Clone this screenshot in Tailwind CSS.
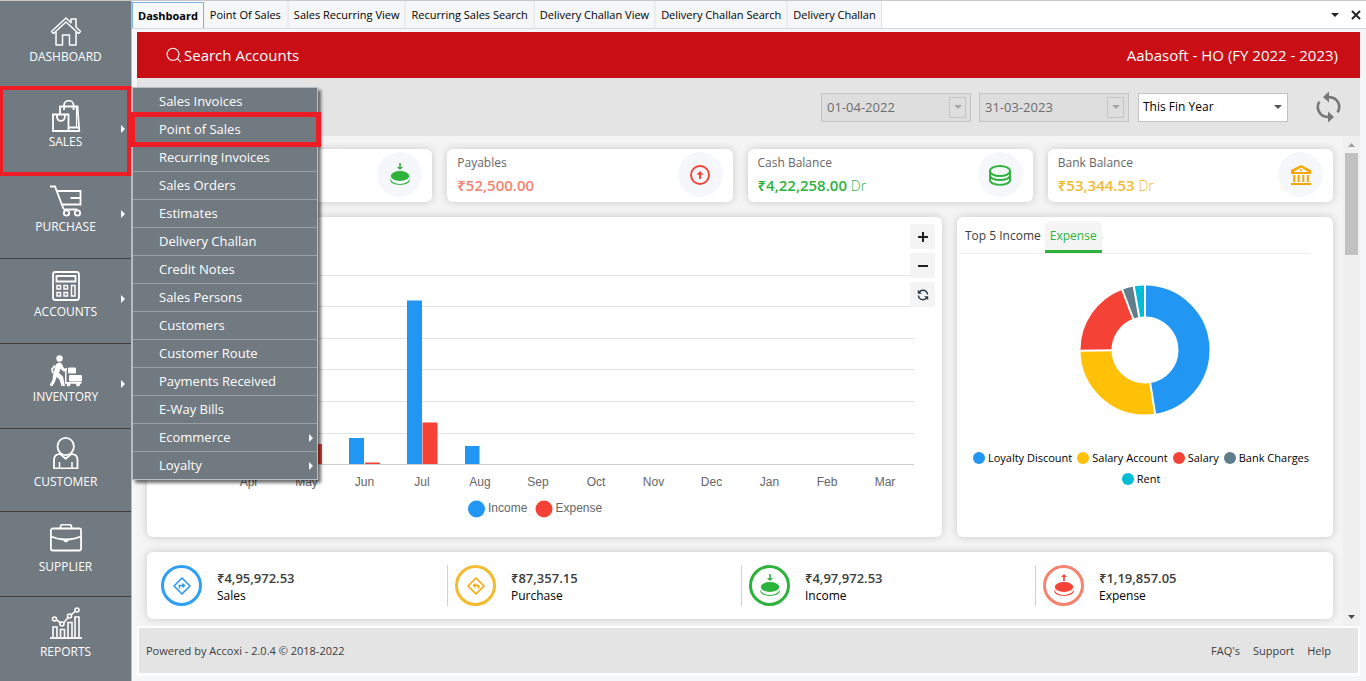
<!DOCTYPE html>
<html lang="en">
<head>
<meta charset="utf-8">
<meta name="viewport" content="width=device-width, initial-scale=1">
<title>Accoxi - Dashboard</title>
<script src="https://cdn.jsdelivr.net/npm/@tailwindcss/browser@4"></script>
</head>
<body class="flex h-screen overflow-hidden border-t border-[#c8c8c8] bg-[#f5f6f8] font-['Open_Sans','Noto_Sans',sans-serif] text-[#3c3c3c]">

<!-- Module navigation -->
<nav class="relative z-10 w-[131px] shrink-0 bg-[#717981] pt-[3px] text-xs text-white" aria-label="Modules">
  <ul>
    <li class="h-[85px]">
      <a href="#" class="flex h-full flex-col items-center pt-[11px]">
        <svg class="size-8" viewBox="0 0 32 32" fill="none" stroke="currentColor" stroke-width="1.5" stroke-linejoin="round"><path d="M1.500 16.500 16 3l5 4.700V4h5v8l4.500 4.500-2 2L16 7 3.500 18.500z"/><path d="M6 17v13h6.500V20h7v10H26V17"/></svg>
        <span class="leading-5">DASHBOARD</span>
      </a>
    </li>
    <li class="relative h-[85px]">
      <a href="#" class="flex h-full flex-col items-center pt-[11px]" aria-haspopup="menu" aria-expanded="true">
        <svg class="size-8" viewBox="0 0 32 32" fill="none" stroke="currentColor" stroke-width="1.800"><path d="M3 14.500h15.500V31H3z"/><path d="M7 14.500v2.500a3.900 3.900 0 0 0 7.800 0v-2.500"/><path d="M10 14.500V6.500h17.500L29.300 31H18.500M14 10V5.500a4.800 4.800 0 0 1 9.600 0V10M19 27.500h10"/><path d="M26.500 7v20" stroke-width="1.200"/></svg>
        <span class="leading-5">SALES</span>
      </a>
      <span class="absolute right-[6px] top-[36px] h-0 w-0 border-y-4 border-l-4 border-y-transparent border-l-white"></span>
      <div class="pointer-events-none absolute inset-x-0 -top-[3px] h-[90px] border-4 border-l-[3px] border-[#ee1c25]"></div>

      <!-- Sales submenu -->
      <ul class="absolute left-[132px] -top-[2px] w-[186px] border border-[#b9bec3] bg-[#717981] text-[13px] text-white shadow-[3px_3px_3px_rgba(0,0,0,0.55)] [&>li]:h-7 [&>li:first-child]:h-[27px] [&>li+li]:border-t [&>li+li]:border-[#99a0a6] [&_a]:flex [&_a]:h-full [&_a]:items-center [&_a]:justify-between [&_a]:pl-[26px] [&_a]:pr-1" role="menu">
        <li><a href="#">Sales Invoices</a></li>
        <li class="relative"><a href="#">Point of Sales</a>
          <div class="pointer-events-none absolute -left-[3px] -right-[4px] -top-[4px] h-[35px] border-[5px] border-[#ee1c25]"></div></li>
        <li><a href="#">Recurring Invoices</a></li>
        <li><a href="#">Sales Orders</a></li>
        <li><a href="#">Estimates</a></li>
        <li><a href="#">Delivery Challan</a></li>
        <li><a href="#">Credit Notes</a></li>
        <li><a href="#">Sales Persons</a></li>
        <li><a href="#">Customers</a></li>
        <li><a href="#">Customer Route</a></li>
        <li><a href="#">Payments Received</a></li>
        <li><a href="#">E-Way Bills</a></li>
        <li><a href="#">Ecommerce<span class="h-0 w-0 border-y-4 border-l-4 border-y-transparent border-l-white"></span></a></li>
        <li><a href="#">Loyalty<span class="h-0 w-0 border-y-4 border-l-4 border-y-transparent border-l-white"></span></a></li>
      </ul>
    </li>
    <li class="relative h-[85px] border-b border-[#3f3f3f]">
      <a href="#" class="flex h-full flex-col items-center pt-[11px]">
        <svg class="size-8" viewBox="0 0 32 32" fill="none" stroke="currentColor" stroke-width="1.800"><path d="M0 1.500h5L13.500 24M7 6h23.500v13.500H12M30.500 13H20.500M13.500 24.500h14"/><circle cx="16.500" cy="28" r="2.700"/><circle cx="27.500" cy="28" r="2.700"/></svg>
        <span class="leading-5">PURCHASE</span>
      </a>
      <span class="absolute right-[6px] top-[36px] h-0 w-0 border-y-4 border-l-4 border-y-transparent border-l-white"></span>
    </li>
    <li class="relative h-[85px] border-b border-[#3f3f3f]">
      <a href="#" class="flex h-full flex-col items-center pt-[11px]">
        <svg class="size-8" viewBox="0 0 32 32" fill="none" stroke="currentColor" stroke-width="1.800"><rect x="3" y="2" width="26" height="28" rx="2.500"/><path d="M6.500 6h19v5.500h-19z"/><g stroke-width="1.500"><path d="M7 15.500h3.500V19H7zM14 15.500h3.500V19H14zM7 22.500h3.500V26H7zM14 22.500h3.500V26H14zM21.500 15.500H25V26h-3.500z"/></g></svg>
        <span class="leading-5">ACCOUNTS</span>
      </a>
      <span class="absolute right-[6px] top-[36px] h-0 w-0 border-y-4 border-l-4 border-y-transparent border-l-white"></span>
    </li>
    <li class="relative h-[85px] border-b border-[#3f3f3f]">
      <a href="#" class="flex h-full flex-col items-center pt-[11px]">
        <svg class="size-8" viewBox="0 0 32 32" fill="currentColor"><circle cx="9.500" cy="3.500" r="3.200"/><path d="M6 9.500c1.500-2 4.500-2.500 6-.5l2 4.500 3-.5v2l-4.500 1-2-2.500-1.500 4.500 4 3.500L15 31h-3.500L9.500 24.500 6.500 22 5 27l-3 4.500-2.500-1.500 2.800-4.500L3.500 18zM4.500 9.500 1 14l1 4.500 1.500-.5-.5-3.500 2.500-3z"/><path d="M13.500 15h3v12h15v1.700H15V16.500h-1.500z"/><rect x="18" y="12.500" width="8" height="6" rx="1.300"/><rect x="19" y="20" width="13" height="6.500" rx="1.300"/><circle cx="18.500" cy="29.500" r="1.900"/><circle cx="28" cy="29.500" r="1.900"/></svg>
        <span class="leading-5">INVENTORY</span>
      </a>
      <span class="absolute right-[6px] top-[36px] h-0 w-0 border-y-4 border-l-4 border-y-transparent border-l-white"></span>
    </li>
    <li class="h-[83px] border-b border-[#3f3f3f]">
      <a href="#" class="flex h-full flex-col items-center pt-2">
        <svg class="mb-[3px] size-8" viewBox="0 0 32 32" fill="none" stroke="currentColor" stroke-width="1.800"><ellipse cx="15.700" cy="9.500" rx="8.200" ry="8.600"/><path d="M4 31.500V23c0-3.500 2-5.500 5-5.800h1.500l5.200 4.500 5.300-4.500h1.500c3 .3 5 2.300 5 5.800v8.500z"/><path d="M9.500 25v6.500M22 25v6.500" stroke-width="1.500"/></svg>
        <span class="leading-5">CUSTOMER</span>
      </a>
    </li>
    <li class="h-[85px] border-b border-[#3f3f3f]">
      <a href="#" class="flex h-full flex-col items-center pt-3">
        <svg class="mb-px size-8" viewBox="0 0 32 32" fill="none" stroke="currentColor" stroke-width="1.800"><rect x=".9" y="4.500" width="30.200" height="22" rx="2"/><path d="M10.500 4.500V3c0-1.500.5-2.300 2-2.300h7c1.500 0 2 .8 2 2.300v1.500M1 12.500c9 4 21 4 30 0"/><path d="M14 15.500h4v1.500c0 1-4 1-4 0z" fill="currentColor" stroke-width="1"/></svg>
        <span class="leading-5">SUPPLIER</span>
      </a>
    </li>
    <li class="h-[82px]">
      <a href="#" class="flex h-full flex-col items-center pt-[10px]">
        <svg class="mb-[3px] size-8" viewBox="0 0 32 32" fill="none" stroke="currentColor" stroke-width="1.600"><path d="M0 31h32" stroke-width="1.800"/><path d="M3 31V20h4v11M10.500 31v-8.500h4V31M18 31V15.500h4V31M25 31V10h4v21M6.500 13l4.500 3M14 15.500l4-5M21 8l4.500-4"/><circle cx="4.500" cy="12" r="2"/><circle cx="12" cy="17" r="2"/><circle cx="19.500" cy="9" r="2"/><circle cx="27" cy="3" r="2"/></svg>
        <span class="leading-5">REPORTS</span>
      </a>
    </li>
  </ul>
</nav>

<div class="flex min-w-0 flex-1 flex-col border-l border-[#b9bbc4]">
  <!-- Open documents -->
  <div class="flex h-7 shrink-0 border-b border-[#d6d9dc] bg-white text-[11px] text-black [&>button]:pt-[2px]" role="tablist">
    <button role="tab" aria-selected="true" class="mt-px border border-b-0 border-[#7aaee6] bg-[#f8f9fb] px-[5px] font-bold">Dashboard</button>
    <button role="tab" class="border-r-2 border-[#ebecee] bg-[#f4f6f8] px-[6px]">Point Of Sales</button>
    <button role="tab" class="border-r-2 border-[#ebecee] bg-[#f4f6f8] px-[5px]">Sales Recurring View</button>
    <button role="tab" class="border-r-2 border-[#ebecee] bg-[#f4f6f8] px-[5px]">Recurring Sales Search</button>
    <button role="tab" class="border-r-2 border-[#ebecee] bg-[#f4f6f8] px-[5px]">Delivery Challan View</button>
    <button role="tab" class="border-r-2 border-[#ebecee] bg-[#f4f6f8] px-[5px]">Delivery Challan Search</button>
    <button role="tab" class="border-r border-[#e2e3e6] bg-[#f4f6f8] px-[5px]">Delivery Challan</button>
    <div class="ml-auto flex items-center gap-3 pr-[5px]">
      <button aria-label="Open tab list"><svg class="h-1 w-2" viewBox="0 0 8 4"><path d="M0 0h8L4 4z" fill="#222"/></svg></button>
      <button aria-label="Close tab"><svg class="size-[10px]" viewBox="0 0 10 10"><path d="M1 1l8 8M9 1 1 9" stroke="#222" stroke-width="1.900"/></svg></button>
    </div>
  </div>

  <div class="ml-[5px] mr-[6px] mt-[3px] flex min-h-0 flex-1 flex-col">
    <header class="flex h-[46px] shrink-0 items-center justify-between bg-[#c90e15] pl-[29px] pr-[22px] text-[15px] text-white">
      <label class="flex items-center gap-[2px]">
        <svg class="size-4" viewBox="0 0 16 16" fill="none" stroke="#fff" stroke-width="1.100"><circle cx="7" cy="7.300" r="6"/><path d="m11.300 11.600 3.700 3.500"/></svg>
        <input type="search" placeholder="Search Accounts" aria-label="Search Accounts" class="w-40 bg-transparent outline-none placeholder:text-white">
      </label>
      <span>Aabasoft - HO (FY 2022 - 2023)</span>
    </header>

    <div class="flex h-[58px] shrink-0 items-center justify-end bg-[#e4e4e4] pr-[18px] text-[13px]">
      <div class="mr-2 flex h-[29px] w-[150px] items-center border border-[#c4c4c4] bg-[#dedede] pr-1">
        <input disabled value="01-04-2022" aria-label="From date" class="min-w-0 flex-1 pl-[5px] pt-[2px] text-[#6d6d6d]">
        <button disabled aria-label="Pick from date" class="flex h-[21px] w-[17px] items-center justify-center border border-[#c4c4c4]"><svg class="h-1 w-2" viewBox="0 0 8 4"><path d="M0 0h8L4 4z" fill="#a5a5a5"/></svg></button>
      </div>
      <div class="mr-[9px] flex h-[29px] w-[150px] items-center border border-[#c4c4c4] bg-[#dedede] pr-1">
        <input disabled value="31-03-2023" aria-label="To date" class="min-w-0 flex-1 pl-[5px] pt-[2px] text-[#6d6d6d]">
        <button disabled aria-label="Pick to date" class="flex h-[21px] w-[17px] items-center justify-center border border-[#c4c4c4]"><svg class="h-1 w-2" viewBox="0 0 8 4"><path d="M0 0h8L4 4z" fill="#a5a5a5"/></svg></button>
      </div>
      <div class="relative mr-[27px]">
        <select aria-label="Period" class="h-[29px] w-[150px] appearance-none border border-[#c4c4c4] bg-white pl-1 text-xs text-black"><option>This Fin Year</option></select>
        <svg class="pointer-events-none absolute right-[6px] top-3 h-1 w-2" viewBox="0 0 8 4"><path d="M0 0h8L4 4z" fill="#555"/></svg>
      </div>
      <button aria-label="Refresh"><svg class="h-8 w-[27px]" viewBox="0 0 24 32" fill="none" stroke="#77787a" stroke-width="2.600"><path d="M12 6c6.500 0 10.700 4.500 10.700 10 0 2-.6 3.800-1.500 5.300"/><path d="M12 26C5.500 26 1.300 21.500 1.300 16c0-2 .6-3.800 1.500-5.300"/><path d="M12.500.5v11L6.500 6zM11.500 20.500v11l6-5.500z" fill="#77787a" stroke="none"/></svg></button>
    </div>

    <div class="flex min-h-0 flex-1">
      <main class="flex min-w-0 flex-1 flex-col gap-[15px] overflow-hidden bg-[#f4f4f4] px-[10px] pb-[7px] pt-[13px]">
        <!-- Balances -->
        <section class="grid shrink-0 grid-cols-4 gap-[15px] [&>div]:flex [&>div]:h-[53px] [&>div]:items-center [&>div]:justify-between [&>div]:rounded-md [&>div]:bg-white [&>div]:px-[10px] [&>div]:pb-[2px] [&>div]:shadow-[0_0_8px_rgba(0,0,0,0.18)]">
          <div>
            <span class="ml-auto flex size-[45px] items-center justify-center rounded-full bg-[#f6f7fb]"><svg class="size-6" viewBox="0 0 24 24" fill="#2db33c"><path d="M11.200 0h1.600v4H15l-3 3-3-3h2.200z"/><ellipse cx="12" cy="13" rx="9.200" ry="5"/><path d="M2.300 14.500C2.500 23 21.500 23 21.700 14.500v2.500c-.2 6.500-19.200 6.500-19.400 0z"/></svg></span>
          </div>
          <div>
            <div class="pb-px leading-[22px]"><p class="text-xs leading-[22px] text-[#666]">Payables</p><p class="text-[15px] leading-[22px] font-semibold text-[#f4846f]">₹52,500.00</p></div>
            <span class="flex size-[45px] items-center justify-center rounded-full bg-[#f6f7fb]"><svg class="size-5" viewBox="0 0 20 20" fill="none" stroke="#f44336" stroke-width="1.900"><circle cx="10" cy="10" r="9"/><path d="M10 14V8"/><path d="M6.500 9.700 10 6l3.500 3.700z" fill="#f44336" stroke="none"/></svg></span>
          </div>
          <div>
            <div class="pb-px"><p class="text-xs leading-[22px] text-[#666]">Cash Balance</p><p class="text-[15px] leading-[22px] font-semibold text-[#2db33c]">₹4,22,258.00 <span class="text-sm font-light">Dr</span></p></div>
            <span class="flex size-[45px] items-center justify-center rounded-full bg-[#f6f7fb]"><svg class="size-6" viewBox="0 0 24 24" fill="none" stroke="#2db33c" stroke-width="1.900"><ellipse cx="12" cy="8" rx="10" ry="5"/><path d="M2 8v9c0 6.500 20 6.500 20 0V8M2 12.500c0 6 20 6 20 0"/></svg></span>
          </div>
          <div>
            <div class="pb-px"><p class="text-xs leading-[22px] text-[#666]">Bank Balance</p><p class="text-[15px] leading-[22px] font-semibold text-[#f3b92f]">₹53,344.53 <span class="text-sm font-light">Dr</span></p></div>
            <span class="flex size-[45px] items-center justify-center rounded-full bg-[#f6f7fb]"><svg class="size-5" viewBox="0 0 20 20" fill="#f9a602"><path fill-rule="evenodd" d="M10 0 0 5v4h20V5zM2.500 7 10 2.500 17.500 7zM2.200 10h2v7h-2zM6.700 10h2v7h-2zM11.300 10h2v7h-2zM15.800 10h2v7h-2zM0 18h20v2H0z"/><circle cx="10" cy="5.200" r="1.100"/></svg></span>
          </div>
        </section>

        <!-- Charts -->
        <section class="grid h-[320px] shrink-0 grid-cols-[795fr_376fr] gap-[15px]">
          <div class="relative rounded-md bg-white shadow-[0_0_8px_rgba(0,0,0,0.18)]">
            <svg class="h-full w-full font-['Liberation_Sans',Arial,sans-serif] text-xs" viewBox="0 0 795 320" fill="#666" role="img" aria-label="Income and expense by month">
              <path d="M73 58.500h694M73 89.500h694M73 121.500h694M73 152.500h694M73 184.500h694M73 216.500h694" stroke="#e2e2e2"/>
              <g fill="#2196f3"><path d="M202 221h15v26h-15zM260 83.500h15V247h-15zM318 229h14.500v18H318z"/></g>
              <g fill="#f44336"><path d="M160 227h15v20h-15zM218 245.500h15v1.500h-15zM275.500 205.500h15V247h-15z"/></g>
              <path d="M73 247.500h694" stroke="#ccc"/>
              <g text-anchor="middle">
                <text x="102" y="269">Apr</text><text x="159.500" y="269">May</text><text x="217.500" y="269">Jun</text><text x="275" y="269">Jul</text><text x="333" y="269">Aug</text><text x="391" y="269">Sep</text><text x="449" y="269">Oct</text><text x="506.500" y="269">Nov</text><text x="564.500" y="269">Dec</text><text x="622.500" y="269">Jan</text><text x="680" y="269">Feb</text><text x="738" y="269">Mar</text>
              </g>
              <circle cx="329.500" cy="292" r="8.500" fill="#2196f3"/><text x="341" y="295">Income</text>
              <circle cx="397" cy="292" r="8.500" fill="#f44336"/><text x="408.500" y="295">Expense</text>
            </svg>
            <div class="absolute right-[7px] top-[7px] flex flex-col gap-1 [&>button]:flex [&>button]:size-[25px] [&>button]:items-center [&>button]:justify-center [&>button]:rounded-[2px] [&>button]:bg-[#f4f4f4]">
              <button aria-label="Zoom in"><svg class="size-[10px]" viewBox="0 0 10 10"><path d="M0 5h10M5 0v10" stroke="#222" stroke-width="2"/></svg></button>
              <button aria-label="Zoom out"><svg class="size-[10px]" viewBox="0 0 10 10"><path d="M0 5h10" stroke="#222" stroke-width="2"/></svg></button>
              <button aria-label="Reset zoom"><svg class="size-3" viewBox="0 0 12 12" fill="none" stroke="#2b3a4b" stroke-width="1.500"><path d="M1.500 6.500C1.500 9 3.500 10.700 6 10.700c1.700 0 3-.7 3.800-2M10.500 5.500C10.500 3 8.500 1.300 6 1.300c-1.700 0-3 .7-3.800 2"/><path d="M.8.8v4h4zM11.200 11.200v-4h-4z" fill="#2b3a4b" stroke="none"/></svg></button>
            </div>
          </div>

          <div class="flex flex-col rounded-md bg-white pt-1 shadow-[0_0_8px_rgba(0,0,0,0.18)]">
            <div class="ml-[3px] mr-[22px] flex border-b border-[#f0f0f0] pl-[5px] text-xs font-medium" role="tablist">
              <button role="tab" class="h-8 pb-[3px] pr-1">Top 5 Income</button>
              <button role="tab" aria-selected="true" class="h-8 rounded-t-md border-b-[3px] border-[#2db33c] bg-[#f4f4f4] px-[5px] text-[#2db33c]">Expense</button>
            </div>
            <svg class="mt-[30px] size-[132px] self-center" viewBox="-66 -66 132 132" role="img" aria-label="Top 5 expenses">
              <g transform="rotate(-90)" fill="none" stroke-width="31">
                <circle r="49" pathLength="360" stroke="#2196f3" stroke-dasharray="171 189"/>
                <circle r="49" pathLength="360" stroke="#ffc107" stroke-dasharray="98.300 261.700" stroke-dashoffset="-171"/>
                <circle r="49" pathLength="360" stroke="#f44336" stroke-dasharray="70 290" stroke-dashoffset="-269.300"/>
                <circle r="49" pathLength="360" stroke="#607d8b" stroke-dasharray="10.700 349.300" stroke-dashoffset="-339.300"/>
                <circle r="49" pathLength="360" stroke="#00bcd4" stroke-dasharray="10 350" stroke-dashoffset="-350"/>
              </g>
              <g stroke="#fff" stroke-width="2"><path d="M0-30v-36"/><path d="M0-30v-36" transform="rotate(171)"/><path d="M0-30v-36" transform="rotate(269.300)"/><path d="M0-30v-36" transform="rotate(339.300)"/><path d="M0-30v-36" transform="rotate(350)"/></g>
            </svg>
            <ul class="mt-[33px] flex flex-wrap justify-center gap-x-[5px] gap-y-[3px] pl-2 pr-4 text-[11px] leading-[18px] text-black [&>li]:flex [&>li]:items-center [&>li]:gap-[3px]">
              <li><span class="size-3 rounded-full bg-[#2196f3]"></span>Loyalty Discount</li>
              <li><span class="size-3 rounded-full bg-[#ffc107]"></span>Salary Account</li>
              <li><span class="size-3 rounded-full bg-[#f44336]"></span>Salary</li>
              <li><span class="size-3 rounded-full bg-[#607d8b]"></span>Bank Charges</li>
              <li><span class="size-3 rounded-full bg-[#00bcd4]"></span>Rent</li>
            </ul>
          </div>
        </section>

        <!-- Totals -->
        <section class="grid h-[67px] shrink-0 grid-cols-4 items-center rounded-md bg-white pl-[7px] pr-[3px] shadow-[0_0_8px_rgba(0,0,0,0.18)] [&>div]:flex [&>div]:h-[41px] [&>div]:items-center [&>div]:gap-[15px] [&>div]:border-[#d0d0d0] [&>div]:pl-[7px] [&_p]:leading-[17px] [&>div>div]:pt-[2px]">
          <div class="border-r">
            <span class="flex size-[41px] items-center justify-center rounded-full border-3 border-[#2f9ff4]"><svg class="size-[18px]" viewBox="0 0 18 18" fill="none" stroke="#2196f3" stroke-width="1.500"><path d="M9 1l8 8-8 8-8-8z" stroke-linejoin="round"/><path d="M6.500 11.500V8.500H10"/><path d="M9.500 5.800v5.400l3-2.700z" fill="#2196f3" stroke="none"/></svg></span>
            <div><p class="text-[13px] font-semibold">₹4,95,972.53</p><p class="text-xs text-black">Sales</p></div>
          </div>
          <div class="border-r">
            <span class="flex size-[41px] items-center justify-center rounded-full border-3 border-[#f3bb2d]"><svg class="size-[18px]" viewBox="0 0 18 18" fill="none" stroke="#f9a602" stroke-width="1.500"><path d="M9 1l8 8-8 8-8-8z" stroke-linejoin="round"/><path d="M11.500 11.500V8.500H8"/><path d="M8.500 5.800v5.400l-3-2.700z" fill="#f9a602" stroke="none"/></svg></span>
            <div><p class="text-[13px] font-semibold">₹87,357.15</p><p class="text-xs text-black">Purchase</p></div>
          </div>
          <div class="border-r">
            <span class="flex size-[41px] items-center justify-center rounded-full border-3 border-[#2db33c]"><svg class="size-6" viewBox="0 0 24 24" fill="#2db33c"><path d="M11.200 0h1.600v4H15l-3 3-3-3h2.200z"/><ellipse cx="12" cy="13" rx="9.200" ry="5"/><path d="M2.300 14.500C2.500 23 21.500 23 21.700 14.500v2.500c-.2 6.500-19.200 6.500-19.400 0z"/></svg></span>
            <div><p class="text-[13px] font-semibold">₹4,97,972.53</p><p class="text-xs text-black">Income</p></div>
          </div>
          <div>
            <span class="flex size-[41px] items-center justify-center rounded-full border-3 border-[#f4846f]"><svg class="size-6" viewBox="0 0 24 24" fill="#f44336"><path d="M11.200 7h1.600V3H15l-3-3-3 3h2.200z"/><ellipse cx="12" cy="13" rx="9.200" ry="5"/><path d="M2.300 14.500C2.500 23 21.500 23 21.700 14.500v2.500c-.2 6.500-19.200 6.500-19.400 0z"/></svg></span>
            <div><p class="text-[13px] font-semibold">₹1,19,857.05</p><p class="text-xs text-black">Expense</p></div>
          </div>
        </section>
      </main>
      <!-- Vertical scroll bar -->
      <div class="flex w-[17px] shrink-0 flex-col items-center bg-[#f0f0f0] py-[7px]" aria-hidden="true">
        <svg class="h-1 w-[7px]" viewBox="0 0 7 4"><path d="M0 4h7L3.500 0z" fill="#a0a0a0"/></svg>
        <div class="mt-[6px] h-[102px] w-[13px] bg-[#c1c1c1]"></div>
        <svg class="mt-auto h-1 w-[7px]" viewBox="0 0 7 4"><path d="M0 0h7L3.500 4z" fill="#505050"/></svg>
      </div>
    </div>

    <footer class="mb-[5px] flex h-[50px] shrink-0 items-center justify-between border-x-2 border-t-2 border-b-3 border-white bg-[#e4e4e4] pl-[7px] pr-[27px] pt-[2px] text-[11px]">
      <span>Powered by Accoxi - 2.0.4 © 2018-2022</span>
      <nav class="flex gap-[13px]"><a href="#">FAQ's</a><a href="#">Support</a><a href="#">Help</a></nav>
    </footer>
  </div>
</div>
</body>
</html>
